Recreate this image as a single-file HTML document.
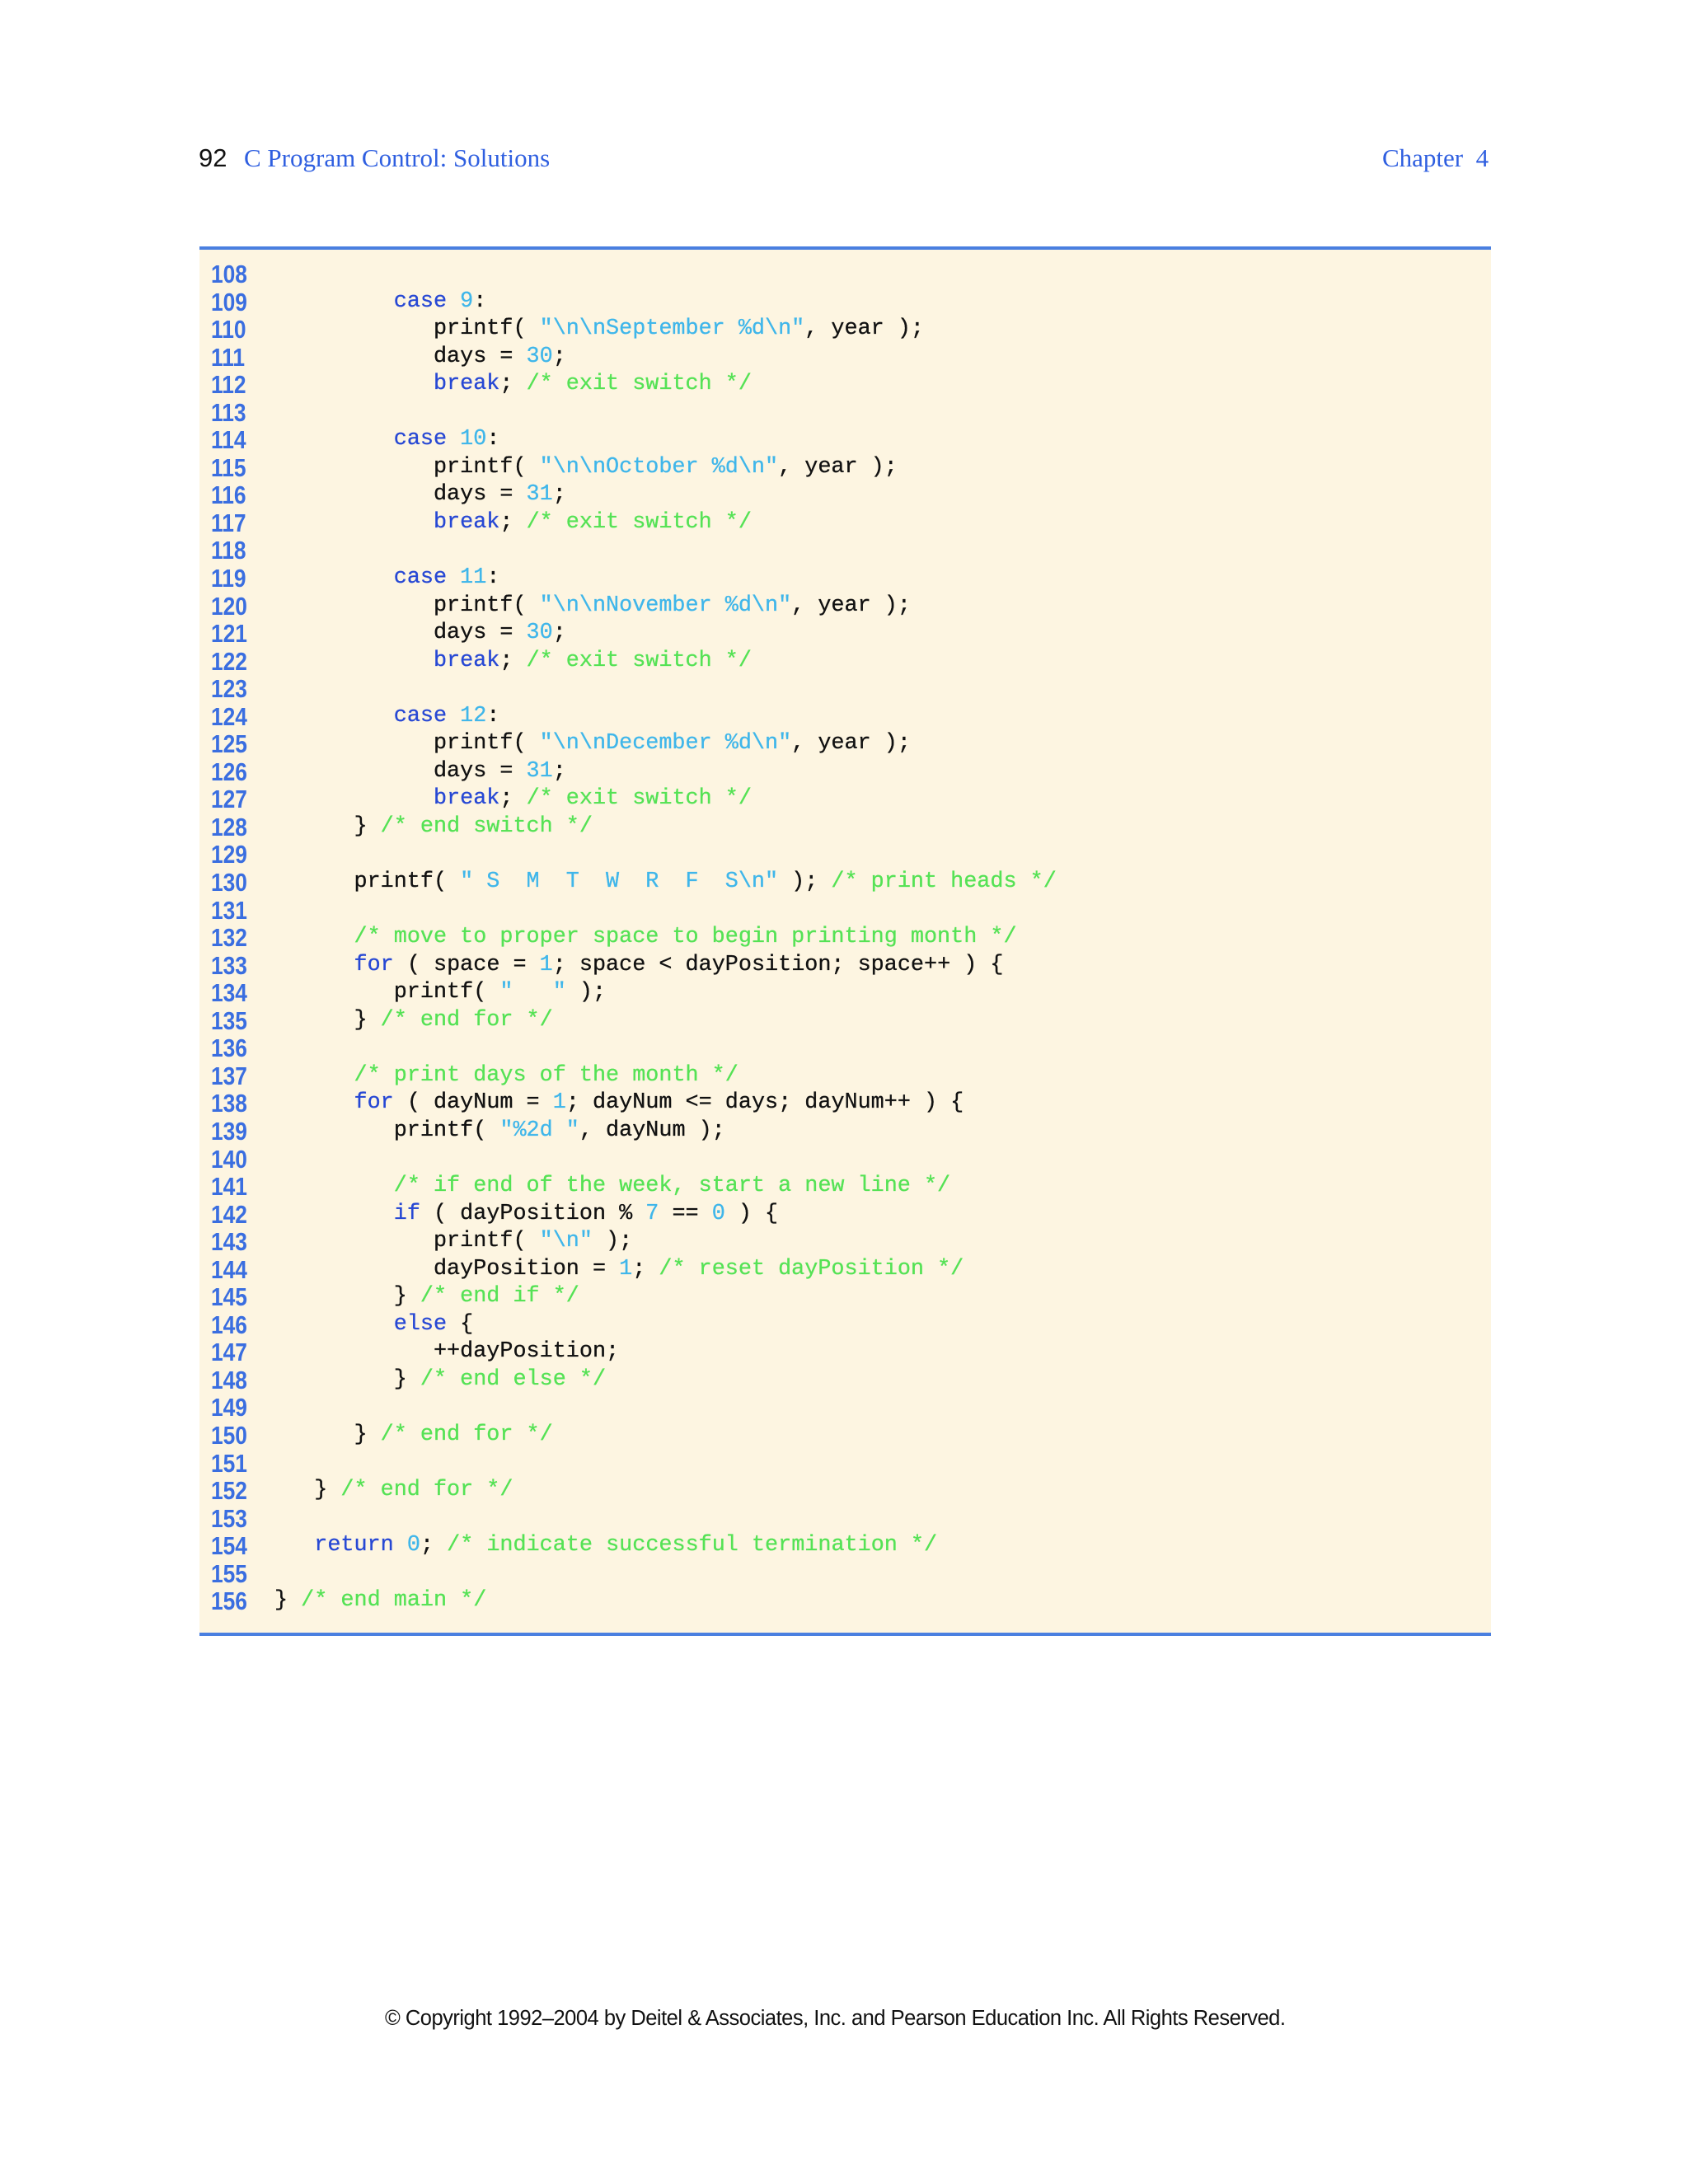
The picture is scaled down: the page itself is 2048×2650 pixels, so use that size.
<!DOCTYPE html>
<html><head><meta charset="utf-8"><style>
html,body{margin:0;padding:0;background:#fff;}
body{width:2048px;height:2650px;position:relative;overflow:hidden;}
.hdr{position:absolute;top:172px;font-size:31px;line-height:40px;white-space:nowrap;}
.box{position:absolute;left:242px;top:299px;width:1567px;height:1678px;background:#fdf5e1;border-top:4px solid #4a7fe0;border-bottom:4px solid #4a7fe0;}
.ln{position:absolute;left:256px;top:316px;font-family:"Liberation Sans",sans-serif;font-weight:bold;font-size:31px;line-height:33.54px;color:#3a6ee0;white-space:pre;transform:scaleX(0.85);transform-origin:0 0;}
.code{position:absolute;left:333px;top:316px;font-family:"Liberation Mono",monospace;font-size:26.8px;line-height:33.54px;color:#111;white-space:pre;margin:0;-webkit-text-stroke:0.3px currentColor;}
.k{color:#2748d4}.n{color:#3fb6ea}.c{color:#55e255}
.foot{position:absolute;left:467px;top:2434px;font-family:"Liberation Sans",sans-serif;font-size:25.5px;line-height:30px;color:#111;white-space:nowrap;letter-spacing:-0.5px;}
</style></head><body>
<div class="hdr" style="left:241px;font-family:'Liberation Sans',sans-serif;color:#111;">92</div>
<div class="hdr" style="left:296px;font-family:'Liberation Serif',serif;color:#2f5fe0;">C Program Control: Solutions</div>
<div class="hdr" style="left:1677px;font-family:'Liberation Serif',serif;color:#2f5fe0;">Chapter&nbsp;&nbsp;4</div>
<div class="box"></div>
<div class="ln">108
109
110
111
112
113
114
115
116
117
118
119
120
121
122
123
124
125
126
127
128
129
130
131
132
133
134
135
136
137
138
139
140
141
142
143
144
145
146
147
148
149
150
151
152
153
154
155
156</div>
<pre class="code">&#8203;
         <span class="k">case</span> <span class="n">9</span>:
            printf( <span class="n">"\n\nSeptember %d\n"</span>, year );
            days = <span class="n">30</span>;
            <span class="k">break</span>; <span class="c">/* exit switch */</span>

         <span class="k">case</span> <span class="n">10</span>:
            printf( <span class="n">"\n\nOctober %d\n"</span>, year );
            days = <span class="n">31</span>;
            <span class="k">break</span>; <span class="c">/* exit switch */</span>

         <span class="k">case</span> <span class="n">11</span>:
            printf( <span class="n">"\n\nNovember %d\n"</span>, year );
            days = <span class="n">30</span>;
            <span class="k">break</span>; <span class="c">/* exit switch */</span>

         <span class="k">case</span> <span class="n">12</span>:
            printf( <span class="n">"\n\nDecember %d\n"</span>, year );
            days = <span class="n">31</span>;
            <span class="k">break</span>; <span class="c">/* exit switch */</span>
      } <span class="c">/* end switch */</span>

      printf( <span class="n">" S  M  T  W  R  F  S\n"</span> ); <span class="c">/* print heads */</span>

      <span class="c">/* move to proper space to begin printing month */</span>
      <span class="k">for</span> ( space = <span class="n">1</span>; space &lt; dayPosition; space++ ) {
         printf( <span class="n">"   "</span> );
      } <span class="c">/* end for */</span>

      <span class="c">/* print days of the month */</span>
      <span class="k">for</span> ( dayNum = <span class="n">1</span>; dayNum &lt;= days; dayNum++ ) {
         printf( <span class="n">"%2d "</span>, dayNum );

         <span class="c">/* if end of the week, start a new line */</span>
         <span class="k">if</span> ( dayPosition % <span class="n">7</span> == <span class="n">0</span> ) {
            printf( <span class="n">"\n"</span> );
            dayPosition = <span class="n">1</span>; <span class="c">/* reset dayPosition */</span>
         } <span class="c">/* end if */</span>
         <span class="k">else</span> {
            ++dayPosition;
         } <span class="c">/* end else */</span>

      } <span class="c">/* end for */</span>

   } <span class="c">/* end for */</span>

   <span class="k">return</span> <span class="n">0</span>; <span class="c">/* indicate successful termination */</span>

} <span class="c">/* end main */</span></pre>
<div class="foot">© Copyright 1992–2004 by Deitel &amp; Associates, Inc. and Pearson Education Inc. All Rights Reserved.</div>
</body></html>
